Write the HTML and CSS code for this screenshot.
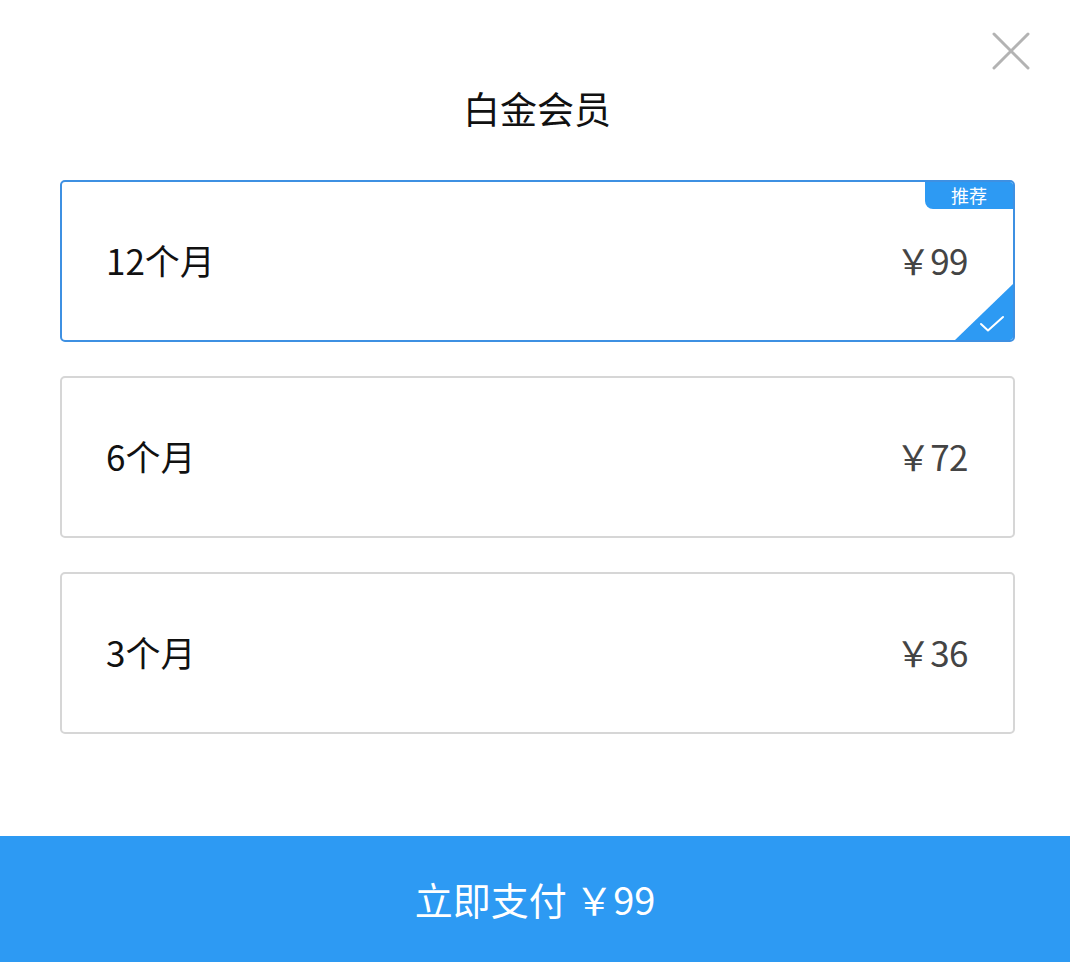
FILE: index.html
```html
<!DOCTYPE html>
<html lang="zh-CN">
<head>
  <meta charset="UTF-8" />
  <title>白金会员</title>
  <meta name="viewport" content="width=device-width, initial-scale=1.0" />
  <link rel="stylesheet" href="styles.css">
</head>
<body>
  <div class="pay-sheet">
    <button class="close-btn" title="关闭">
      <svg width="38" height="38" viewBox="0 0 38 38">
        <path d="M2 2 L36 36 M36 2 L2 36" stroke="#b3b3b3" stroke-width="3" stroke-linecap="round" fill="none"/>
      </svg>
    </button>

    <h2 class="title">白金会员</h2>

    <ul class="plans">
      <li class="plan selected">
        <span class="plan-name">12个月</span>
        <span class="plan-price">￥99</span>
        <span class="tag">推荐</span>
        <span class="corner">
          <svg width="26" height="18" viewBox="0 0 26 18">
            <path d="M2 9 L9 15.5 L24 2" stroke="#fff" stroke-width="2" fill="none" stroke-linecap="round" stroke-linejoin="round"/>
          </svg>
        </span>
      </li>
      <li class="plan">
        <span class="plan-name">6个月</span>
        <span class="plan-price">￥72</span>
      </li>
      <li class="plan">
        <span class="plan-name">3个月</span>
        <span class="plan-price">￥36</span>
      </li>
    </ul>

    <button class="pay-btn">立即支付 ￥99</button>
  </div>
</body>
</html>
```

FILE: styles.css
```css
:root {
  --blue: #2d9af3;
  --border-blue: #3e90e2;
  --line: #d6d6d6;
  --text: #111;
}

* {
  box-sizing: border-box;
}

body {
  margin: 0;
  background: #fff;
  font-family: "Noto Sans CJK SC", "Noto Sans", sans-serif;
  color: var(--text);
}

.pay-sheet {
  position: relative;
  width: 1070px;
  height: 962px;
  display: flex;
  flex-direction: column;
}

.close-btn {
  position: absolute;
  top: 32px;
  right: 40px;
  background: none;
  border: none;
  padding: 0;
  width: 38px;
  height: 38px;
  cursor: pointer;
}

.title {
  margin: 0;
  padding-top: 86px;
  height: 180px;
  text-align: center;
  font-size: 37px;
  line-height: 44px;
  font-weight: 400;
  padding-left: 4px;
}

.plans {
  list-style: none;
  margin: 0;
  padding: 0 55px 0 60px;
  display: flex;
  flex-direction: column;
  gap: 34px;
}

.plan {
  position: relative;
  height: 162px;
  border: 2px solid var(--line);
  border-radius: 5px;
  display: flex;
  align-items: center;
  justify-content: space-between;
  padding: 0 45px 4px 44px;
  overflow: hidden;
}

.plan.selected {
  border-color: var(--border-blue);
}

.plan-name {
  font-size: 35px;
  color: var(--text);
}

.plan-price {
  font-size: 35px;
  color: #444;
  font-weight: 400;
  letter-spacing: -0.5px;
}

.tag {
  position: absolute;
  top: 0;
  right: 0;
  width: 88px;
  height: 27px;
  background: var(--blue);
  color: #fff;
  font-size: 18px;
  line-height: 27px;
  text-align: center;
  border-bottom-left-radius: 8px;
}

.corner {
  position: absolute;
  right: 0;
  bottom: 0;
  width: 58px;
  height: 56px;
  background: var(--blue);
  clip-path: polygon(100% 0, 100% 100%, 0 100%);
}

.corner svg {
  position: absolute;
  right: 8px;
  bottom: 7px;
}

.pay-btn {
  margin-top: auto;
  height: 126px;
  width: 100%;
  border: none;
  background: var(--blue);
  color: #fff;
  font-family: inherit;
  font-size: 38px;
  padding-bottom: 2px;
  cursor: pointer;
}
```
